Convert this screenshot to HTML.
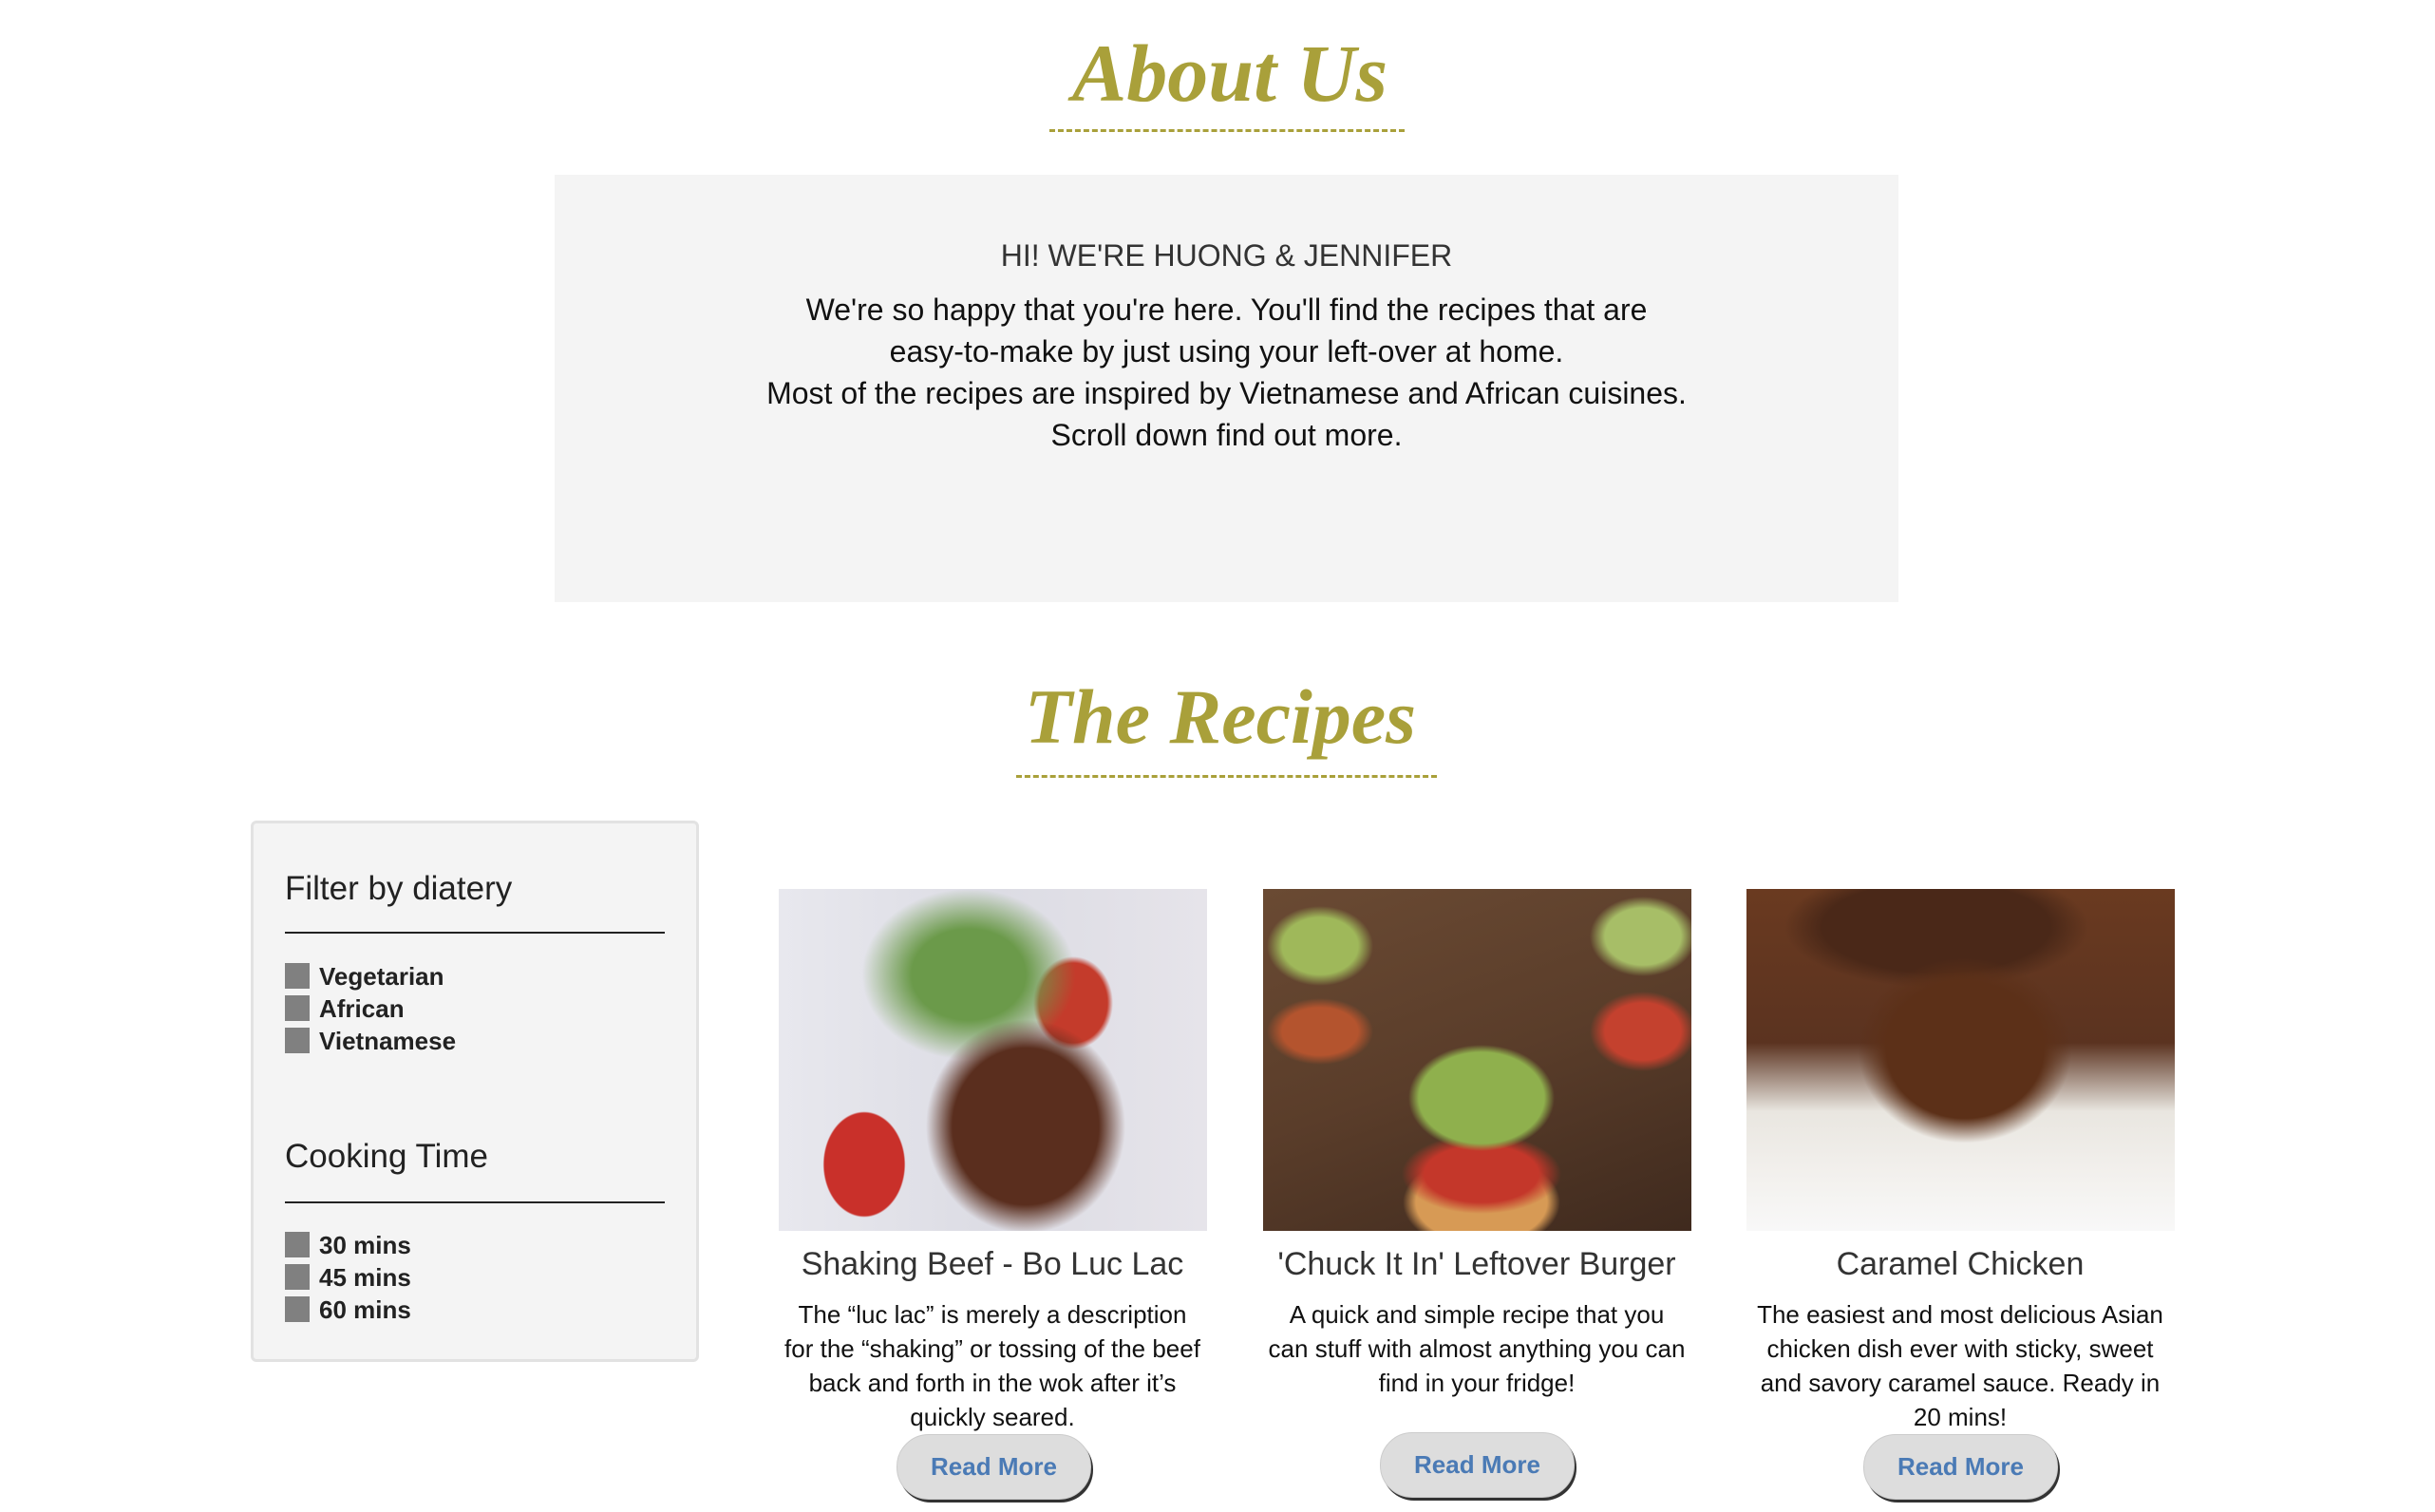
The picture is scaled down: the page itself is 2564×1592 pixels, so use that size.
<!DOCTYPE html>
<html><head><meta charset="utf-8"><style>
*{margin:0;padding:0;box-sizing:border-box}
body{width:2564px;height:1592px;background:#fff;position:relative;overflow:hidden;font-family:"Liberation Sans",sans-serif}
.abs{position:absolute}
.script{font-family:"Liberation Serif",serif;font-style:italic;font-weight:bold;color:#a9a03a;text-align:center;white-space:nowrap}
.dash{border-top:3px dashed #a9a03a;height:0}
.about{left:584px;top:184px;width:1415px;height:450px;background:#f4f4f4}
.body{font-size:32px;line-height:44px;color:#111;text-align:center;width:1415px;left:584px}
.side{left:264px;top:864px;width:472px;height:570px;background:#f4f4f4;border:3px solid #e2e2e2;border-radius:6px}
.h{font-size:35px;color:#222;left:300px}
.rule{left:300px;width:400px;height:2px;background:#222}
.cb{left:300px;width:26px;height:27px;background:#808080}
.lbl{left:336px;font-size:26px;font-weight:bold;color:#222;line-height:30px}
.img{top:936px;width:451px;height:360px}
.t{font-size:34px;color:#333;text-align:center;width:500px;top:1312px}
.d{font-size:26px;line-height:36px;color:#111;text-align:center;width:440px;top:1366px}
.btn{width:205px;height:69px;border-radius:34px;background:#ddd;border:1px solid #ccc;box-shadow:2px 3px 0 #333;color:#4a7ab5;font-weight:bold;font-size:26px;text-align:center;line-height:67px}
</style></head><body>
<div class="abs script" style="left:1000px;top:22px;width:590px;font-size:86px;line-height:110px">About Us</div>
<div class="abs dash" style="left:1105px;top:136px;width:374px"></div>

<div class="abs about"></div>
<div class="abs" style="left:584px;top:251px;width:1415px;text-align:center;font-size:32px;color:#333">HI! WE'RE HUONG &amp; JENNIFER</div>
<div class="abs body" style="top:304px">We're so happy that you're here. You'll find the recipes that are<br>easy-to-make by just using your left-over at home.<br>Most of the recipes are inspired by Vietnamese and African cuisines.<br>Scroll down find out more.</div>

<div class="abs script" style="left:990px;top:700px;width:590px;font-size:82px;line-height:110px">The Recipes</div>
<div class="abs dash" style="left:1070px;top:816px;width:443px"></div>

<div class="abs side"></div>
<div class="abs h" style="top:916px">Filter by diatery</div>
<div class="abs rule" style="top:981px"></div>
<div class="abs cb" style="top:1014px"></div><div class="abs lbl" style="top:1013px">Vegetarian</div>
<div class="abs cb" style="top:1048px"></div><div class="abs lbl" style="top:1047px">African</div>
<div class="abs cb" style="top:1082px"></div><div class="abs lbl" style="top:1081px">Vietnamese</div>
<div class="abs h" style="top:1198px">Cooking Time</div>
<div class="abs rule" style="top:1265px"></div>
<div class="abs cb" style="top:1297px"></div><div class="abs lbl" style="top:1296px">30 mins</div>
<div class="abs cb" style="top:1331px"></div><div class="abs lbl" style="top:1330px">45 mins</div>
<div class="abs cb" style="top:1365px"></div><div class="abs lbl" style="top:1364px">60 mins</div>

<div class="abs img" style="left:820px;background:radial-gradient(ellipse 70px 90px at 90px 290px,#c9302a 60%,transparent 62%),radial-gradient(ellipse 140px 150px at 260px 250px,#5a2e1e 55%,transparent 75%),radial-gradient(ellipse 150px 120px at 200px 90px,#6b9a4a 40%,transparent 75%),radial-gradient(ellipse 60px 70px at 310px 120px,#c43b2b 60%,transparent 70%),linear-gradient(90deg,#e8e8ee,#dcdce4 50%,#e6e4ea)"></div>
<div class="abs img" style="left:1330px;background:radial-gradient(ellipse 110px 80px at 230px 220px,#8fb04d 60%,transparent 70%),radial-gradient(ellipse 120px 60px at 230px 300px,#c4372a 50%,transparent 70%),radial-gradient(ellipse 115px 70px at 230px 330px,#d79a55 60%,transparent 72%),radial-gradient(ellipse 80px 60px at 60px 60px,#9fb85a 50%,transparent 70%),radial-gradient(ellipse 80px 60px at 400px 50px,#a7be67 50%,transparent 70%),radial-gradient(ellipse 80px 60px at 400px 150px,#c4412e 50%,transparent 70%),radial-gradient(ellipse 80px 50px at 60px 150px,#b4542e 50%,transparent 70%),linear-gradient(160deg,#6a4a33,#5a3d2a 50%,#3f2a1e)"></div>
<div class="abs img" style="left:1839px;background:radial-gradient(ellipse 150px 130px at 230px 170px,#5c3018 55%,transparent 75%),radial-gradient(ellipse 200px 80px at 200px 40px,#4a2818 60%,transparent 80%),linear-gradient(180deg,#6a3a20 0%,#5b3320 45%,#e9e6e0 65%,#f3f1ee 85%,#f8f8f8 100%)"></div>

<div class="abs t" style="left:795px">Shaking Beef - Bo Luc Lac</div>
<div class="abs t" style="left:1305px">'Chuck It In' Leftover Burger</div>
<div class="abs t" style="left:1814px">Caramel Chicken</div>
<div class="abs d" style="left:825px">The “luc lac” is merely a description for the “shaking” or tossing of the beef back and forth in the wok after it’s quickly seared.</div>
<div class="abs d" style="left:1335px">A quick and simple recipe that you can stuff with almost anything you can find in your fridge!</div>
<div class="abs d" style="left:1844px">The easiest and most delicious Asian chicken dish ever with sticky, sweet and savory caramel sauce. Ready in 20 mins!</div>

<div class="abs btn" style="left:944px;top:1510px">Read More</div>
<div class="abs btn" style="left:1453px;top:1508px">Read More</div>
<div class="abs btn" style="left:1962px;top:1510px">Read More</div>
</body></html>
